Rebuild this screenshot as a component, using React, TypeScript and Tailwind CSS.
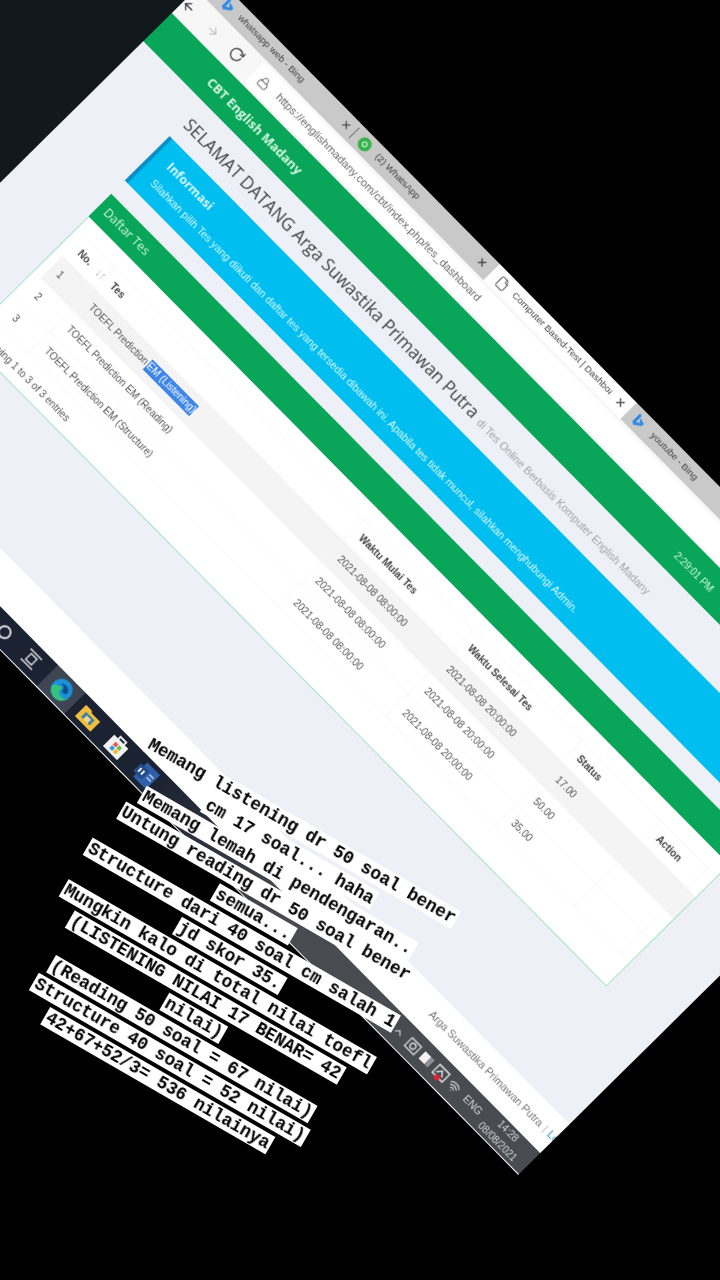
import React from 'react';
import { ArrowLeft, ArrowRight, ChevronUp, File, Lock, RotateCw, Wifi, X } from 'lucide-react';

const CAPTION = [
  'Memang listening dr 50 soal bener',
  'cm 17 soal... haha',
  'Memang lemah di pendengaran..',
  'Untung reading dr 50 soal bener',
  'semua...',
  'Structure dari 40 soal cm salah 1',
  'jd skor 35.',
  'Mungkin kalo di total nilai toefl',
  '(LISTENING NILAI 17 BENAR= 42',
  'nilai)',
  '(Reading 50 soal = 67 nilai)',
  'Structure 40 soal = 52 nilai)',
  '42+67+52/3= 536 nilainya',
];

const ROWS = [
  { no: '1', test: 'TOEFL Prediction ', mark: 'EM (Listening)', end: '2021-08-08 20:00:00', score: '17.00' },
  { no: '2', test: 'TOEFL Prediction EM (Reading)', mark: '', end: '2021-08-08 20:00:00', score: '50.00' },
  { no: '3', test: 'TOEFL Prediction EM (Structure)', mark: '', end: '2021-08-08 20:00:00', score: '35.00' },
];

const COLS = 'grid grid-cols-[46px_354px_155px_155px_113px_66px]';
const CELL = 'flex items-center pl-[9px] border-r border-[#f7f7f7] whitespace-nowrap';

const BingIcon = () => (
  <svg width="13" height="15" viewBox="0 0 13 15" className="shrink-0">
    <path d="M2 1l3 1v8l4-2-2-1-1-3 6 2v3l-7 5-3-2z" fill="#2f8be6" />
  </svg>
);

const EdgeIcon = () => (
  <svg width="24" height="24" viewBox="0 0 24 24">
    <circle cx="12" cy="12" r="11" fill="#1c8fd6" />
    <path d="M2 15c2 6 8 9 14 7 3-1 6-4 7-8-3 4-8 4-10 2-2-1-3-4-1-6-4 0-8 2-10 5z" fill="#35c37a" />
    <path d="M7 8c3-3 9-3 11 1 1 2 0 4-3 4-1 0-2 0-2-1 0-3-3-5-6-4z" fill="#0c4f8f" />
  </svg>
);

const FolderIcon = () => (
  <svg width="24" height="22" viewBox="0 0 24 22">
    <path d="M1 4h8l2 2h12v14H1z" fill="#eebc3f" />
    <path d="M6 9h12v7H6z" fill="#3d7f9f" />
    <path d="M9 11h6v5H9z" fill="#e7d59a" />
  </svg>
);

const StoreIcon = () => (
  <svg width="24" height="24" viewBox="0 0 24 24">
    <path d="M8 6V3h8v3" fill="none" stroke="#e6e6e6" strokeWidth="2" />
    <path d="M2 6h20v16H2z" fill="#f2f2f2" />
    <path d="M8 10h4v4H8z" fill="#e2574c" />
    <path d="M13 10h4v4h-4z" fill="#6cbb45" />
    <path d="M8 15h4v4H8z" fill="#3a96dd" />
    <path d="M13 15h4v4h-4z" fill="#f5b82e" />
  </svg>
);

const DocsIcon = () => (
  <svg width="24" height="22" viewBox="0 0 24 22">
    <path d="M5 1h18v20H5z" fill="#2f5fa8" />
    <path d="M1 6h12v11H1z" fill="#234a86" />
    <path d="M4 9h2v5H4zM8 9h2v5H8z" fill="#e8eef8" />
    <path d="M15 7h6v2h-6zM15 11h6v2h-6z" fill="#9db8e0" />
  </svg>
);

const TaskViewIcon = () => (
  <svg width="18" height="16" viewBox="0 0 18 16" fill="none" stroke="#d8dbe0" strokeWidth="1.4">
    <path d="M1 1h16M1 15h16" />
    <path d="M5 4h8v8H5z" />
  </svg>
);

const TrayCamera = () => (
  <svg width="15" height="13" viewBox="0 0 15 13" fill="none" stroke="#d4d6da" strokeWidth="1.3">
    <path d="M1 1h13v11H1z" />
    <circle cx="7.5" cy="6.5" r="3" />
  </svg>
);

const TrayBattery = () => (
  <svg width="15" height="12" viewBox="0 0 15 12">
    <path d="M1 1h13v10H1z" fill="#8b8e93" />
    <path d="M1 1h8v10H1z" fill="#f2f2f2" />
  </svg>
);

const TrayAlert = () => (
  <svg width="17" height="17" viewBox="0 0 17 17" fill="none">
    <path d="M1.5 2h14v11h-14z" stroke="#e6e6e6" strokeWidth="1.4" />
    <path d="M4 10l4-5 4 5" stroke="#e6e6e6" strokeWidth="1.3" />
    <circle cx="8.5" cy="13.5" r="3" fill="#e3222d" />
  </svg>
);

const App: React.FC = () => {
  return (
    <div className="relative w-[720px] h-[1280px] overflow-hidden bg-black font-['Liberation_Sans',sans-serif]">
      <div className="absolute top-0 left-0 w-[210px] h-[210px] bg-[#11191c]" />

      {/* Photographed desktop, tilted */}
      <div className="absolute top-0 left-0 w-[1070px] h-[627px] origin-top-left [transform:rotate(45.35deg)_translate(130px,-170px)] flex flex-col overflow-hidden blur-[0.6px] bg-white">
        {/* Tabs */}
        <div className="flex h-[23px] shrink-0 bg-[#c9c9c9] text-[#3f3f3f] text-[9.8px]">
          <div className="flex items-center w-[214px] pl-[28px] shrink-0">
            <BingIcon />
            <span className="ml-[9px] w-[142px] whitespace-nowrap">whatsapp web - Bing</span>
            <X size={11} strokeWidth={2.5} className="ml-[11px]" />
            <div className="ml-[6px] w-px h-[15px] bg-[#777]" />
          </div>
          <div className="flex items-center w-[195px] pl-[8px] shrink-0">
            <div className="flex items-center justify-center w-[14px] h-[14px] rounded-full bg-[#35b34a] shrink-0">
              <div className="w-[6px] h-[6px] rounded-full border border-white" />
            </div>
            <span className="ml-[9px] w-[138px] whitespace-nowrap">(2) WhatsApp</span>
            <X size={11} strokeWidth={2.5} className="ml-[7px]" />
          </div>
          <div className="flex items-center w-[195px] pl-[9px] shrink-0 bg-white">
            <File size={14} strokeWidth={1.6} className="shrink-0" />
            <span className="ml-[8px] w-[139px] overflow-hidden whitespace-nowrap">Computer Based-Test | Dashboard</span>
            <X size={11} strokeWidth={2.5} className="ml-[8px]" />
          </div>
          <div className="flex items-center pl-[8px]">
            <BingIcon />
            <span className="ml-[12px] whitespace-nowrap">youtube - Bing</span>
          </div>
        </div>

        {/* Toolbar */}
        <div className="flex items-center h-[34px] shrink-0 bg-[#f7f7f7] text-[#555]">
          <ArrowLeft size={15} className="text-[#333]" />
          <ArrowRight size={15} className="ml-[19px] text-[#c4c4c4]" />
          <RotateCw size={16} className="ml-[18px] text-[#444]" />
          <div className="flex items-center ml-[17px] flex-1 h-[28px] bg-white pl-[8px]">
            <Lock size={13} strokeWidth={1.6} />
            <span className="ml-[12px] text-[11.5px] text-[#6a6a6a] whitespace-nowrap">
              https://englishmadany.com/cbt/index.php/tes_dashboard
            </span>
          </div>
        </div>

        {/* App header */}
        <div className="flex items-center h-[40px] shrink-0 bg-[#09a558] pl-[74px] pt-[2px] text-[#d2f8e0]">
          <span className="w-[665px] text-[13px] font-bold font-['Open_Sans',sans-serif]">CBT English Madany</span>
          <span className="text-[10px]">2:29:01 PM</span>
        </div>

        {/* Page */}
        <div className="h-[458px] shrink-0 bg-[#edf0f6] pl-[86px] w-full">
          <div className="flex items-baseline h-[48px] pt-[11px] pl-[2px] whitespace-nowrap">
            <span className="text-[17.4px] leading-[28px] text-[#444] font-['Open_Sans',sans-serif]">SELAMAT DATANG Arga Suwastika Primawan Putra</span>
            <span className="ml-[6px] text-[11px] text-[#a0a3a8]">di Tes Online Berbasis Komputer English Madany</span>
          </div>

          <div className="w-[912px] h-[63px] bg-[#00bff0] border-l-[4px] border-[#0b8fc6] pl-[16px] pt-[12px] text-[#d8f6ff]">
            <div className="text-[12.5px] leading-[18px] font-bold font-['Open_Sans',sans-serif]">Informasi</div>
            <div className="mt-[7px] text-[10.75px] leading-[14px] whitespace-nowrap">
              Silahkan pilih Tes yang diikuti dan daftar tes yang tersedia dibawah ini. Apabila tes tidak muncul, silahkan menghubungi Admin.
            </div>
          </div>

          <div className="mt-[19px] w-[912px]">
            <div className="flex items-center h-[32px] bg-[#09a558] pl-[8px] text-[12.5px] text-[#cbf8dc] font-['Open_Sans',sans-serif]">Daftar Tes</div>
            <div className="h-[173px] bg-white border-x border-b border-[#a4e3c3] pl-[9px] pt-[17px] text-[#555] text-[10.2px]">
              <div className={`${COLS} h-[30px] font-bold text-[#444] border-y border-[#f7f7f7]`}>
                <div className={`${CELL} pl-[5px]`}>
                  No.
                  <span className="ml-[9px] text-[#b5b5b5] text-[12px] tracking-[-1px]">↓↑</span>
                </div>
                <div className={CELL}>Tes</div>
                <div className={CELL}>Waktu Mulai Tes</div>
                <div className={CELL}>Waktu Selesai Tes</div>
                <div className={CELL}>Status</div>
                <div className={CELL}>Action</div>
              </div>
              {ROWS.map((row, i) => (
                <div key={row.no} className={`${COLS} h-[31px] border-b border-[#f8f8f8] ${i === 0 ? 'bg-[#f4f4f4]' : ''}`}>
                  <div className={`${CELL} pl-[5px]`}>{row.no}</div>
                  <div className={CELL}>
                    {row.test}
                    {row.mark && <span className="ml-[2px] bg-[#3d85e8] text-white leading-[14px]">{row.mark}</span>}
                  </div>
                  <div className={CELL}>2021-08-08 08:00:00</div>
                  <div className={CELL}>{row.end}</div>
                  <div className={CELL}>{row.score}</div>
                  <div className={CELL} />
                </div>
              ))}
              <div className="mt-[9px] leading-[18px] text-[#555]">Showing 1 to 3 of 3 entries</div>
            </div>
          </div>
        </div>

        {/* Footer */}
        <div className="flex items-center h-[41px] shrink-0 bg-white pl-[893px] text-[11px] text-[#777] whitespace-nowrap overflow-hidden">
          Arga Suwastika Primawan Putra
          <span className="mx-[4px] text-[#bbb]">|</span>
          <span className="text-[#3c8dbc]">Logout</span>
        </div>

        {/* Taskbar */}
        <div className="flex items-center h-[30px] shrink-0 bg-gradient-to-r from-[#1b2231] from-[50%] to-[#484b50] to-[68%] text-[#d4d6da] pl-[304px]">
          <div className="flex items-center justify-center w-[38px]">
            <div className="w-[14px] h-[14px] rounded-full border-2 border-[#d8dbe0]" />
          </div>
          <div className="flex items-center justify-center w-[38px]">
            <TaskViewIcon />
          </div>
          <div className="flex items-center justify-center w-[39px] h-full ml-[4px] bg-[#3e4552]">
            <EdgeIcon />
          </div>
          <div className="flex items-center justify-center w-[40px] h-full">
            <FolderIcon />
          </div>
          <div className="flex items-center justify-center w-[40px] h-full">
            <StoreIcon />
          </div>
          <div className="flex items-center justify-center w-[40px] h-full">
            <DocsIcon />
          </div>
          <div className="flex items-center ml-[335px] text-[#d4d6da]">
            <ChevronUp size={13} />
            <div className="ml-[4px] flex w-[19px] justify-center"><TrayCamera /></div>
            <div className="flex w-[19px] justify-center"><TrayBattery /></div>
            <div className="flex w-[21px] justify-center"><TrayAlert /></div>
            <Wifi size={14} className="ml-[1px]" />
            <span className="ml-[8px] text-[10.5px]">ENG</span>
            <div className="ml-[7px] flex flex-col items-center text-[10px] leading-[15px]">
              <span>14:28</span>
              <span>08/08/2021</span>
            </div>
          </div>
        </div>
      </div>

      {/* Caption over the photo */}
      <div className="absolute top-0 left-0 w-[600px] origin-top-left [transform:rotate(30deg)_translate(377px,557px)] flex flex-col items-center font-['Liberation_Mono',monospace] font-bold text-black text-[17.8px] blur-[0.3px]">
        {CAPTION.map((line) => (
          <div key={line} className="h-[24px] flex items-center">
            <span className="bg-white px-[2px] leading-[20px] whitespace-pre">{line}</span>
          </div>
        ))}
      </div>
    </div>
  );
};

export default App;
